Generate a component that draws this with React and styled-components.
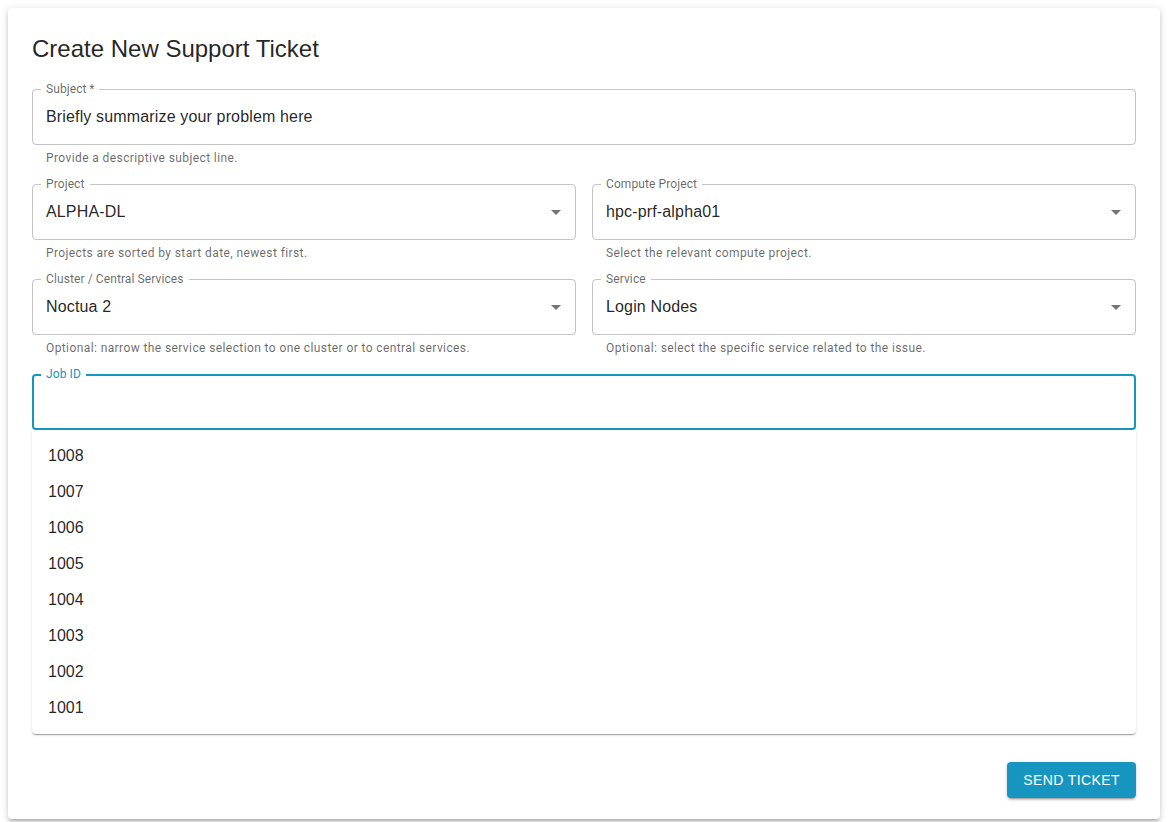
import styled, { createGlobalStyle } from "styled-components";

const GlobalStyle = createGlobalStyle`
  html, body {
    margin: 0;
    padding: 0;
    background: #fff;
  }
  body {
    font-family: Roboto, "Liberation Sans", Arial, sans-serif;
    color: rgba(0, 0, 0, 0.87);
  }
  * {
    box-sizing: border-box;
  }
`;

const BLUE = "#1795c1";

const jobIds = ["1008", "1007", "1006", "1005", "1004", "1003", "1002", "1001"];

const Page = styled.div`
  padding: 8px;
`;

const Card = styled.main`
  background: #fff;
  border-radius: 4px;
  padding: 25px 24px 21px;
  box-shadow: 0px 3px 3px -2px rgba(0, 0, 0, 0.2),
    0px 3px 4px 0px rgba(0, 0, 0, 0.14), 0px 1px 8px 0px rgba(0, 0, 0, 0.12);
`;

const Title = styled.h1`
  margin: 0 0 24px;
  font-family: "Liberation Sans", Arial, sans-serif;
  font-size: 24px;
  font-weight: 400;
  line-height: 32px;
  color: rgba(0, 0, 0, 0.87);
`;

const Form = styled.div`
  display: grid;
  grid-template-columns: 1fr 1fr;
  column-gap: 16px;
  row-gap: 16px;
`;

const FormControl = styled.div`
  grid-column: ${(p) => (p.$wide ? "1 / -1" : "auto")};
  position: relative;
`;

const Outline = styled.div`
  position: relative;
  height: ${(p) => p.$height || 56}px;
  display: flex;
  align-items: center;
  padding: 0 ${(p) => (p.$focused ? 12 : 13)}px 1px;
  border: ${(p) => (p.$focused ? `2px solid ${BLUE}` : "1px solid rgba(0, 0, 0, 0.23)")};
  border-radius: 4px;
`;

const Label = styled.label`
  position: absolute;
  top: ${(p) => (p.$focused ? -9 : -8)}px;
  left: ${(p) => (p.$focused ? 7 : 8)}px;
  padding: 0 5px;
  background: #fff;
  font-size: 12px;
  line-height: 14px;
  letter-spacing: 0.1px;
  color: ${(p) => (p.$focused ? BLUE : "rgba(0, 0, 0, 0.6)")};
`;

const Value = styled.div`
  flex: 1;
  font-family: "Liberation Sans", Arial, sans-serif;
  font-size: 16px;
  line-height: 23px;
  letter-spacing: 0.15px;
  color: rgba(0, 0, 0, 0.87);
  white-space: nowrap;
`;

const Helper = styled.p`
  margin: 3px 14px 0;
  font-size: 12px;
  line-height: 20px;
  letter-spacing: 0.4px;
  color: rgba(0, 0, 0, 0.6);
`;

const Arrow = styled.svg`
  width: 24px;
  height: 24px;
  margin-right: -6px;
  fill: rgba(0, 0, 0, 0.54);
  flex-shrink: 0;
`;

const Listbox = styled.ul`
  position: absolute;
  top: 100%;
  left: 0;
  right: 0;
  z-index: 2;
  margin: 0;
  padding: 8px 0;
  list-style: none;
  background: #fff;
  border-radius: 0 0 4px 4px;
  box-shadow: 0px 2px 1px -1px rgba(0, 0, 0, 0.2),
    0px 1px 1px 0px rgba(0, 0, 0, 0.14), 0px 1px 3px 0px rgba(0, 0, 0, 0.12);
`;

const Option = styled.li`
  height: 36px;
  display: flex;
  align-items: center;
  padding: 0 16px;
  font-family: "Liberation Sans", Arial, sans-serif;
  font-size: 16px;
  color: rgba(0, 0, 0, 0.87);
`;

const Actions = styled.div`
  display: flex;
  justify-content: flex-end;
  margin-top: 36px;
`;

const Button = styled.button`
  height: 36px;
  padding: 0 16px;
  border: none;
  border-radius: 4px;
  background: ${BLUE};
  color: #fff;
  font-family: "Liberation Sans", Arial, sans-serif;
  font-size: 14px;
  font-weight: 500;
  letter-spacing: 0.4px;
  text-transform: uppercase;
  cursor: pointer;
  box-shadow: 0px 3px 1px -2px rgba(0, 0, 0, 0.2),
    0px 2px 2px 0px rgba(0, 0, 0, 0.14), 0px 1px 5px 0px rgba(0, 0, 0, 0.12);
`;

const DropArrow = () => (
  <Arrow viewBox="0 0 24 24">
    <path d="M7 10l5 5 5-5z" />
  </Arrow>
);

const SelectField = ({ label, value, helper }) => (
  <FormControl>
    <Outline>
      <Label>{label}</Label>
      <Value>{value}</Value>
      <DropArrow />
    </Outline>
    <Helper>{helper}</Helper>
  </FormControl>
);

const App = () => {
  return (
    <>
      <GlobalStyle />
      <Page>
        <Card>
          <Title>Create New Support Ticket</Title>
          <Form>
            <FormControl $wide>
              <Outline>
                <Label>Subject{"\u2009"}*</Label>
                <Value>Briefly summarize your problem here</Value>
              </Outline>
              <Helper>Provide a descriptive subject line.</Helper>
            </FormControl>

            <SelectField
              label="Project"
              value="ALPHA-DL"
              helper="Projects are sorted by start date, newest first."
            />
            <SelectField
              label="Compute Project"
              value="hpc-prf-alpha01"
              helper="Select the relevant compute project."
            />
            <SelectField
              label="Cluster / Central Services"
              value="Noctua 2"
              helper="Optional: narrow the service selection to one cluster or to central services."
            />
            <SelectField
              label="Service"
              value="Login Nodes"
              helper="Optional: select the specific service related to the issue."
            />

            <FormControl $wide>
              <Outline $focused>
                <Label $focused>Job ID</Label>
                <Value />
              </Outline>
              <Listbox>
                {jobIds.map((id) => (
                  <Option key={id}>{id}</Option>
                ))}
              </Listbox>
            </FormControl>

            {/* description box, hidden under the open job list */}
            <FormControl $wide>
              <Outline $height={280} />
            </FormControl>
          </Form>
          <Actions>
            <Button>Send Ticket</Button>
          </Actions>
        </Card>
      </Page>
    </>
  );
};

export default App;
